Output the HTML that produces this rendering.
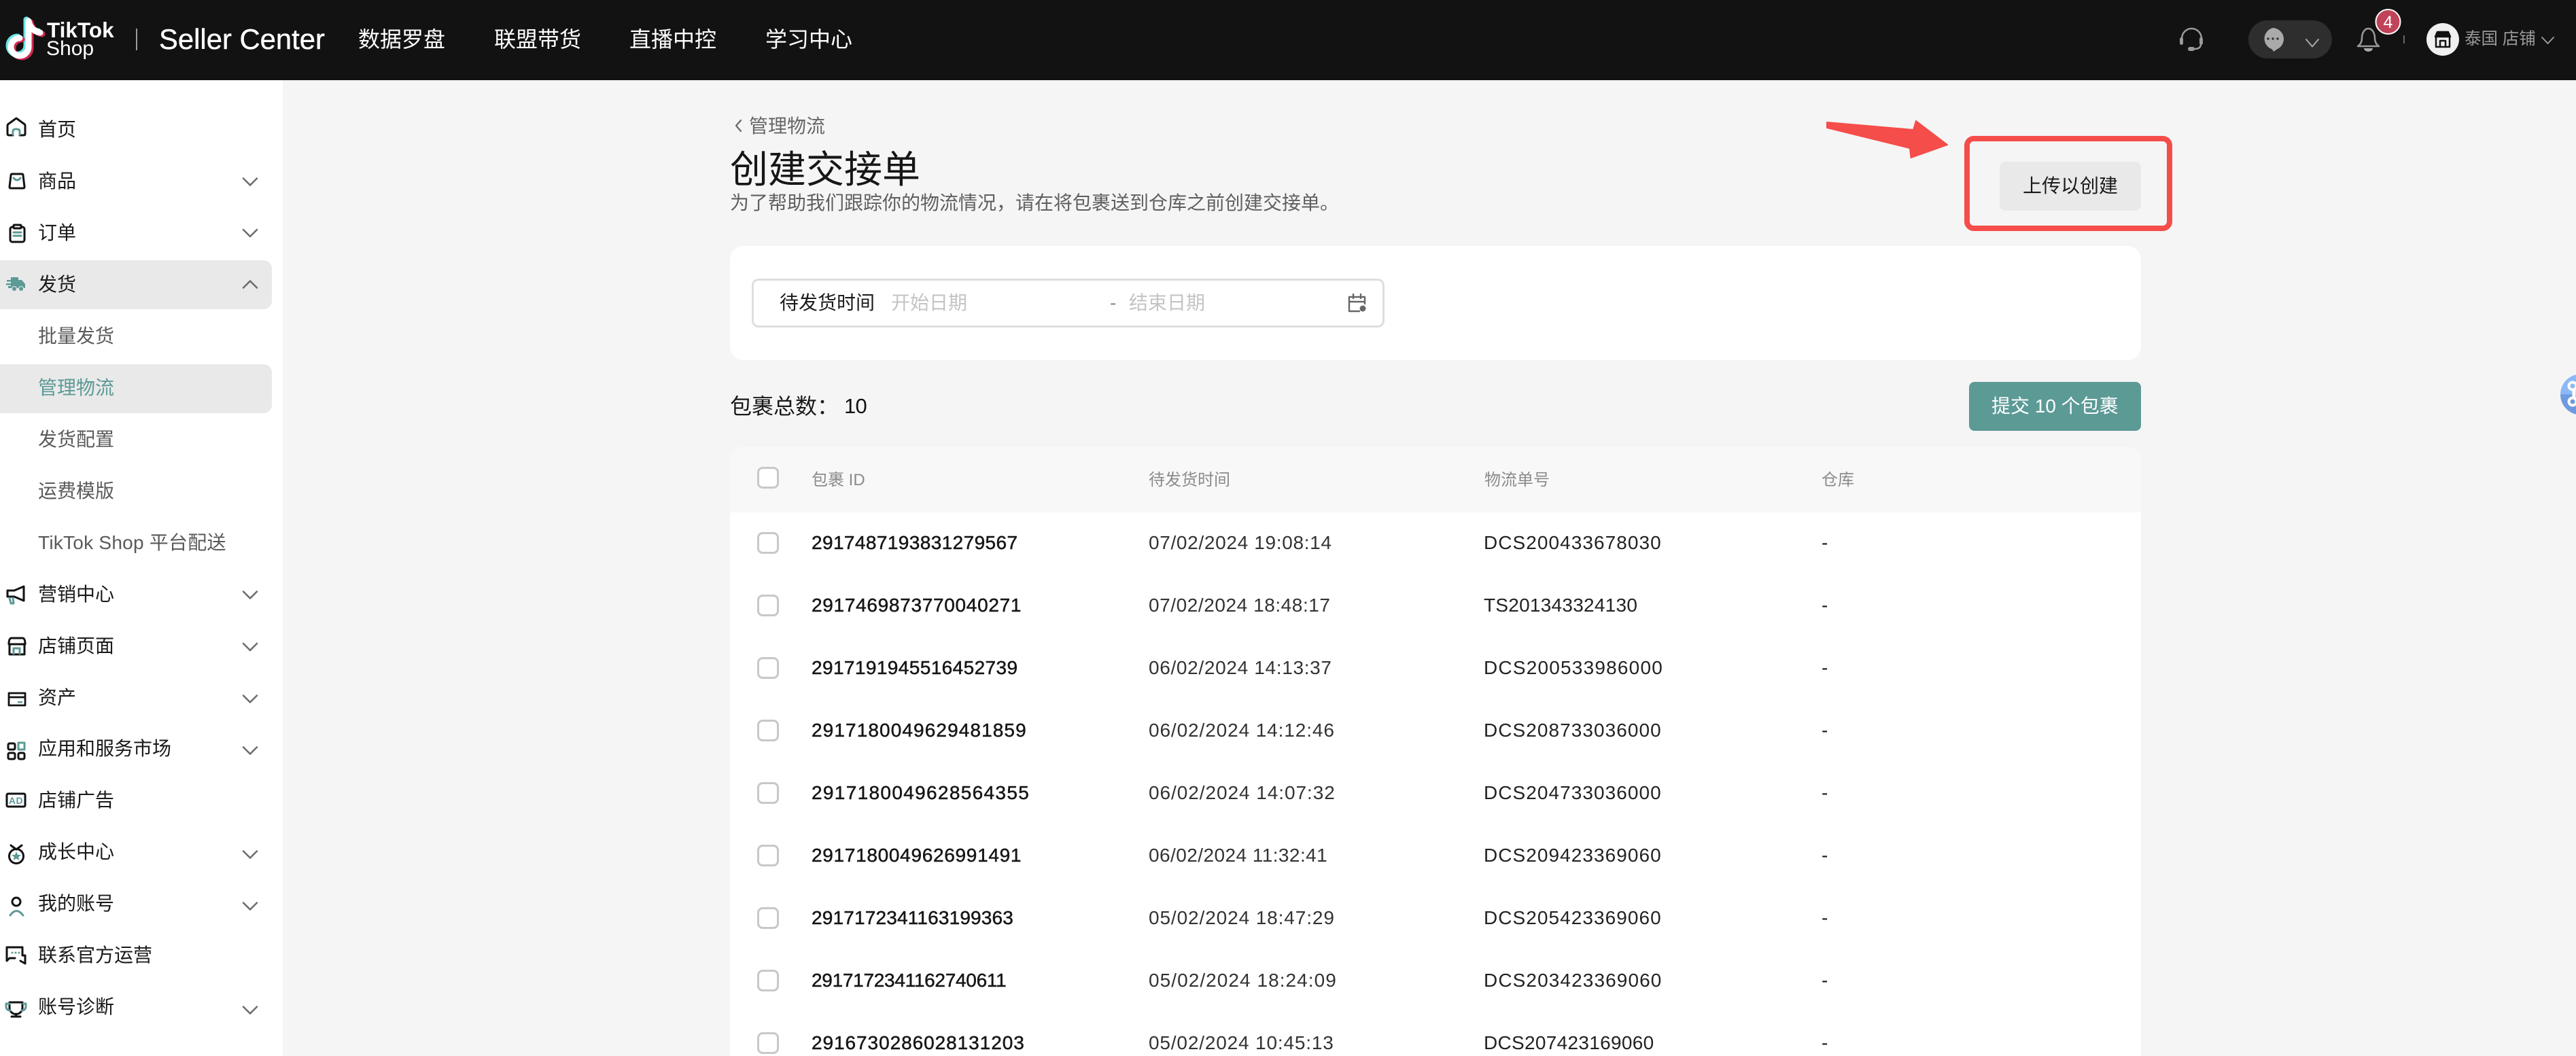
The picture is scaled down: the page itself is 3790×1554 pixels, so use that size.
<!DOCTYPE html>
<html lang="zh"><head><meta charset="utf-8"><title>创建交接单</title>
<style>
*{box-sizing:border-box}
html,body{margin:0;padding:0;width:3790px;height:1554px;overflow:hidden;background:#f5f5f5}
body{position:relative;font-family:"Liberation Sans","Noto Sans CJK SC",sans-serif;font-size:28px;color:#1a1a1a}
.b{position:absolute}
.t{position:absolute;white-space:nowrap;line-height:40px;height:40px}
.s{color:#5a5a5a}
.h{color:#8a8a8a;font-size:24px}
.id{color:#161616;-webkit-text-stroke:.5px #161616}
.d{color:#333}
.n{color:#222;letter-spacing:1.05px}
.c{position:absolute;left:1114px;width:32px;height:32px;border:3px solid #c8c8c8;border-radius:8px;background:#fff}
svg{position:absolute;left:0;top:0}
</style></head><body>
<div class="b" style="left:0;top:0;width:3790px;height:118px;background:#121212"></div>
<div class="b" style="left:0;top:118px;width:416px;height:1436px;background:#fff"></div>
<div class="b" style="left:0;top:383px;width:400px;height:72px;background:#e9e9e9;border-radius:0 12px 12px 0"></div>
<div class="b" style="left:0;top:536px;width:400px;height:72px;background:#e9e9e9;border-radius:0 12px 12px 0"></div>

<div class="t" style="left:69px;top:24px;font-size:31.5px;font-weight:700;color:#fff">TikTok</div>
<div class="t" style="left:68px;top:52px;font-size:30px;color:#fff">Shop</div>
<div class="b" style="left:200px;top:42px;width:2px;height:32px;background:#9a9a9a"></div>
<div class="t" style="left:234px;top:38px;font-size:41.8px;color:#fff;-webkit-text-stroke:.4px #fff">Seller Center</div>
<div class="t" style="left:527px;top:38px;font-size:32px;color:#fff">数据罗盘</div>
<div class="t" style="left:727px;top:38px;font-size:32px;color:#fff">联盟带货</div>
<div class="t" style="left:926px;top:38px;font-size:32px;color:#fff">直播中控</div>
<div class="t" style="left:1126px;top:38px;font-size:32px;color:#fff">学习中心</div>
<div class="t" style="left:3626px;top:38px;font-size:24.5px;color:#9a9a9a">泰国 店铺</div>

<div class="t" style="left:56px;top:171px">首页</div>
<div class="t" style="left:56px;top:247px">商品</div>
<div class="t" style="left:56px;top:323px">订单</div>
<div class="t" style="left:56px;top:399px">发货</div>
<div class="t s" style="left:56px;top:475px">批量发货</div>
<div class="t" style="left:56px;top:551px;color:#5c9a96">管理物流</div>
<div class="t s" style="left:56px;top:627px">发货配置</div>
<div class="t s" style="left:56px;top:703px">运费模版</div>
<div class="t s" style="left:56px;top:779px;letter-spacing:.25px">TikTok Shop 平台配送</div>
<div class="t" style="left:56px;top:855px">营销中心</div>
<div class="t" style="left:56px;top:931px">店铺页面</div>
<div class="t" style="left:56px;top:1007px">资产</div>
<div class="t" style="left:56px;top:1082px">应用和服务市场</div>
<div class="t" style="left:56px;top:1158px">店铺广告</div>
<div class="t" style="left:56px;top:1234px">成长中心</div>
<div class="t" style="left:56px;top:1310px">我的账号</div>
<div class="t" style="left:56px;top:1386px">联系官方运营</div>
<div class="t" style="left:56px;top:1462px">账号诊断</div>

<div class="t" style="left:1102px;top:166px;color:#666">管理物流</div>
<div class="t" style="left:1074px;top:220px;font-size:56px;line-height:60px;height:60px;color:#161616">创建交接单</div>
<div class="t" style="left:1074px;top:279px;color:#5f5f5f">为了帮助我们跟踪你的物流情况，请在将包裹送到仓库之前创建交接单。</div>

<div class="b" style="left:1074px;top:362px;width:2076px;height:168px;background:#fff;border-radius:20px"></div>
<div class="b" style="left:1106px;top:410px;width:931px;height:72px;background:#fff;border:3px solid #dedede;border-radius:10px"></div>
<div class="t" style="left:1147px;top:426px">待发货时间</div>
<div class="t" style="left:1311px;top:426px;color:#c4c4c4">开始日期</div>
<div class="t" style="left:1633px;top:426px;color:#888">-</div>
<div class="t" style="left:1661px;top:426px;color:#c4c4c4">结束日期</div>

<div class="b" style="left:2942px;top:238px;width:208px;height:72px;background:#e9e9e9;border-radius:8px"></div>
<div class="t" style="left:2976px;top:254px">上传以创建</div>
<div class="b" style="left:2890px;top:200px;width:306px;height:140px;border:8px solid #f54d4a;border-radius:14px"></div>

<div class="t" style="left:1074px;top:578px;font-size:32px">包裹总数：</div>
<div class="t" style="left:1242px;top:578px;color:#111;font-size:31px;letter-spacing:-.8px">10</div>
<div class="b" style="left:2897px;top:562px;width:253px;height:72px;background:#5c9a96;border-radius:8px"></div>
<div class="t" style="left:2930px;top:578px;color:#fff">提交 10 个包裹</div>

<div class="b" style="left:1074px;top:658px;width:2076px;height:96px;background:#f8f8f8;border-radius:16px 16px 0 0"></div>
<div class="b" style="left:1074px;top:754px;width:2076px;height:800px;background:#fff"></div>
<div class="c" style="top:687px"></div>
<div class="t h" style="left:1194px;top:687px">包裹 ID</div>
<div class="t h" style="left:1690px;top:687px">待发货时间</div>
<div class="t h" style="left:2184px;top:687px">物流单号</div>
<div class="t h" style="left:2680px;top:687px">仓库</div>

<div class="c" style="top:783px"></div>
<div class="t id" style="left:1194px;top:779px;letter-spacing:.4px">2917487193831279567</div>
<div class="t d" style="left:1690px;top:779px;letter-spacing:.67px">07/02/2024 19:08:14</div>
<div class="t n" style="left:2183px;top:779px">DCS200433678030</div>
<div class="t" style="left:2680px;top:779px">-</div>

<div class="c" style="top:875px"></div>
<div class="t id" style="left:1194px;top:871px;letter-spacing:.7px">2917469873770040271</div>
<div class="t d" style="left:1690px;top:871px;letter-spacing:.56px">07/02/2024 18:48:17</div>
<div class="t n" style="left:2183px;top:871px;letter-spacing:.25px">TS201343324130</div>
<div class="t" style="left:2680px;top:871px">-</div>

<div class="c" style="top:967px"></div>
<div class="t id" style="left:1194px;top:963px;letter-spacing:.4px">2917191945516452739</div>
<div class="t d" style="left:1690px;top:963px;letter-spacing:.67px">06/02/2024 14:13:37</div>
<div class="t n" style="left:2183px;top:963px;letter-spacing:1.2px">DCS200533986000</div>
<div class="t" style="left:2680px;top:963px">-</div>

<div class="c" style="top:1059px"></div>
<div class="t id" style="left:1194px;top:1055px;letter-spacing:1.1px">2917180049629481859</div>
<div class="t d" style="left:1690px;top:1055px;letter-spacing:.89px">06/02/2024 14:12:46</div>
<div class="t n" style="left:2183px;top:1055px">DCS208733036000</div>
<div class="t" style="left:2680px;top:1055px">-</div>

<div class="c" style="top:1151px"></div>
<div class="t id" style="left:1194px;top:1147px;letter-spacing:1.33px">2917180049628564355</div>
<div class="t d" style="left:1690px;top:1147px;letter-spacing:.94px">06/02/2024 14:07:32</div>
<div class="t n" style="left:2183px;top:1147px">DCS204733036000</div>
<div class="t" style="left:2680px;top:1147px">-</div>

<div class="c" style="top:1243px"></div>
<div class="t id" style="left:1194px;top:1239px;letter-spacing:.7px">2917180049626991491</div>
<div class="t d" style="left:1690px;top:1239px;letter-spacing:.44px">06/02/2024 11:32:41</div>
<div class="t n" style="left:2183px;top:1239px">DCS209423369060</div>
<div class="t" style="left:2680px;top:1239px">-</div>

<div class="c" style="top:1335px"></div>
<div class="t id" style="left:1194px;top:1331px;letter-spacing:.17px">2917172341163199363</div>
<div class="t d" style="left:1690px;top:1331px;letter-spacing:.89px">05/02/2024 18:47:29</div>
<div class="t n" style="left:2183px;top:1331px">DCS205423369060</div>
<div class="t" style="left:2680px;top:1331px">-</div>

<div class="c" style="top:1427px"></div>
<div class="t id" style="left:1194px;top:1423px;letter-spacing:-.28px">2917172341162740611</div>
<div class="t d" style="left:1690px;top:1423px;letter-spacing:1.05px">05/02/2024 18:24:09</div>
<div class="t n" style="left:2183px;top:1423px;letter-spacing:1.1px">DCS203423369060</div>
<div class="t" style="left:2680px;top:1423px">-</div>

<div class="c" style="top:1519px"></div>
<div class="t id" style="left:1194px;top:1515px;letter-spacing:.94px">2916730286028131203</div>
<div class="t d" style="left:1690px;top:1515px;letter-spacing:.83px">05/02/2024 10:45:13</div>
<div class="t n" style="left:2183px;top:1515px;letter-spacing:.3px">DCS207423169060</div>
<div class="t" style="left:2680px;top:1515px">-</div>

<svg width="3790" height="1554" viewBox="0 0 3790 1554" fill="none" stroke-linecap="round" stroke-linejoin="round">
<!-- logo -->
<g stroke-width="9" fill="none">
<g stroke="#69e5e8" transform="translate(-3 -2)"><path d="M42 31V69A13 13 0 1 1 29 56"/><path d="M42 31Q45 45 59 48"/></g>
<g stroke="#d02a50" transform="translate(3 2)"><path d="M42 31V69A13 13 0 1 1 29 56"/><path d="M42 31Q45 45 59 48"/></g>
<g stroke="#fff"><path d="M42 31V69A13 13 0 1 1 29 56"/><path d="M42 31Q45 45 59 48"/></g>
</g>
<!-- top right -->
<g stroke="#9a9a9a" stroke-width="2.5">
<path d="M3210 60V57A14.5 15 0 0 1 3239 57V60"/>
<path d="M3238 66Q3237 72 3229 72"/>
</g>
<g fill="#9a9a9a"><rect x="3207" y="55" width="5" height="11" rx="2.5"/><rect x="3236" y="55" width="5" height="11" rx="2.5"/><rect x="3219" y="69" width="10" height="6" rx="3"/></g>
<rect x="3308" y="30" width="123" height="56" rx="28" fill="#2e2e2e"/>
<path d="M3344 41A17 16.500 0 0 1 3350 72.500L3345 76L3343 72.500A17 16.500 0 0 1 3344 41Z" fill="#aaa"/>
<g fill="#333"><circle cx="3337" cy="57" r="1.700"/><circle cx="3344" cy="57" r="1.700"/><circle cx="3351" cy="57" r="1.700"/></g>
<path d="M3393 58L3402 68.500L3411 58" stroke="#aaa" stroke-width="2"/>
<path d="M3469 68Q3475 64 3475 56A9.500 14 0 0 1 3494 56Q3494 64 3500 68Z" stroke="#9a9a9a" stroke-width="2.5"/>
<path d="M3478 71H3491A6.500 5 0 0 1 3478 71Z" fill="#aaa"/>
<circle cx="3513.500" cy="32" r="18" fill="#c0435a" stroke="#fff" stroke-width="2"/>
<text x="3513.500" y="41" font-family="Liberation Sans" font-size="25" fill="#fff" text-anchor="middle">4</text>
<rect x="3536" y="52" width="2" height="12" fill="#666"/>
<circle cx="3594" cy="58" r="24" fill="#f0f0f0"/>
<g stroke="#121212" stroke-width="2.500"><path d="M3584 54V69H3604V54"/><path d="M3583 54L3586 47H3602L3605 54Z" fill="#121212"/><path d="M3590 69V60H3598V69"/></g>
<path d="M3740 55L3748.500 64L3757 55" stroke="#9a9a9a" stroke-width="2"/>

<!-- side chevrons -->
<g stroke="#6b6b6b" stroke-width="2.500">
<path d="M358 262.500L368 272.500L378 262.500"/><path d="M358 338L368 348L378 338"/><path d="M378 423.500L368 413.500L358 423.500"/>
<path d="M358 870.500L368 880.500L378 870.500"/><path d="M358 947L368 957L378 947"/><path d="M358 1023.500L368 1033.500L378 1023.500"/>
<path d="M358 1099.500L368 1109.500L378 1099.500"/><path d="M358 1252.500L368 1262.500L378 1252.500"/><path d="M358 1328.500L368 1338.500L378 1328.500"/><path d="M358 1481.500L368 1491.500L378 1481.500"/>
</g>

<!-- side icons -->
<g stroke="#121212" stroke-width="3">
<path d="M19 199H13Q11 199 11 197V185Q11 183 13 182L24 174L35 182Q37 183 37 185V197Q37 199 35 199H29"/>
<path d="M18 256H32Q34 256 34 258L36 275Q36 277 34 277H16Q14 277 14 275L16 258Q16 256 18 256Z"/>
<rect x="15" y="334" width="21" height="22" rx="3"/><rect x="20" y="331" width="11" height="5" rx="1" fill="#fff"/>
<path d="M11 869H21L35 863V884L21 878H11Z"/>
<path d="M14 949V963H36V949"/><path d="M13 948Q13 939 17 939H33Q37 939 37 948Z"/>
<path d="M13 1020H37V1038H13ZM13 1026H37" stroke-width="2.800"/>
<rect x="12" y="1094" width="10" height="9" rx="2"/><rect x="12" y="1108" width="10" height="9" rx="2"/><rect x="27" y="1108" width="9" height="9" rx="2"/>
<rect x="10" y="1168" width="27" height="19" rx="2"/>
<circle cx="24" cy="1260" r="10.500"/><path d="M16 1244L24 1250L32 1244"/>
<circle cx="24" cy="1327" r="6"/>
<path d="M22 1410H14L10 1414V1394H33V1406H37V1418L30 1414"/>
<path d="M14 1475H33V1483A9.500 9.500 0 0 1 14 1483ZM23.500 1492V1496M17 1496H30"/>
</g>
<g stroke="#5c9a96" stroke-width="3">
<path d="M19 198V193Q19 190 24 190Q29 190 29 193V198"/>
<path d="M20 262Q25 268 30 262"/>
<path d="M20 342H31M20 347H31"/>
<path d="M14 880L16 888H20L19 880"/>
<path d="M20 962V954H29V962"/>
<path d="M27 1093H36V1103H27Z"/>
<path d="M15 1347Q24 1334 34 1347"/>
<path d="M14 1477H9V1482Q10 1487 15 1487M34 1477H38V1482Q37 1487 32 1487"/>
</g>
<g fill="#5c9a96">
<path d="M16 408H27V412H32L37 418V424H16ZM10 412H17V414.500H10ZM9 417H17V419.500H9ZM12 421H17V424H12Z"/>
<circle cx="21" cy="425" r="3.500" stroke="#e9e9e9" stroke-width="1"/><circle cx="31" cy="425" r="3.500" stroke="#e9e9e9" stroke-width="1"/>
<rect x="26" y="1032" width="7" height="2.500"/>
<path d="M24 1253L26 1258L31 1258L27 1261.500L28.500 1266L24 1263.500L19.500 1266L21 1261.500L17 1258L22 1258Z"/>
<circle cx="18" cy="1402" r="1.500"/><circle cx="23" cy="1402" r="1.500"/><circle cx="28" cy="1402" r="1.500"/>
</g>
<text x="23.500" y="1183" font-family="Liberation Sans" font-weight="700" font-size="14" fill="#5c9a96" text-anchor="middle" letter-spacing=".5">AD</text>

<!-- breadcrumb chevron, calendar -->
<path d="M1090 177L1083 185L1090 193" stroke="#666" stroke-width="2.200"/>
<g stroke="#666" stroke-width="2.400"><path d="M2000 458H1985V437H2008V447"/><path d="M1985 444H2008M1991 433V439M2002 433V439"/></g>
<circle cx="2005" cy="454" r="4.500" fill="#666"/>

<!-- red arrow -->
<path d="M2688 180L2815 191L2819 178L2865 213L2811.500 232L2810 218L2688 188Z" fill="#f54d4a" stroke="#f54d4a" stroke-width="2"/>

<!-- float widget -->
<path d="M3767 580.500A30 30 0 0 1 3827 580.500Z" fill="#8cb8f8"/>
<path d="M3767 580.500A30 30 0 0 0 3827 580.500Z" fill="#6e9ae0"/>
<g stroke="#fff" stroke-width="4"><circle cx="3785" cy="568" r="5.500"/><circle cx="3785" cy="591" r="5.500"/></g>
<path d="M3787 574V585" stroke="#fff" stroke-width="5"/>
</svg>
</body></html>
